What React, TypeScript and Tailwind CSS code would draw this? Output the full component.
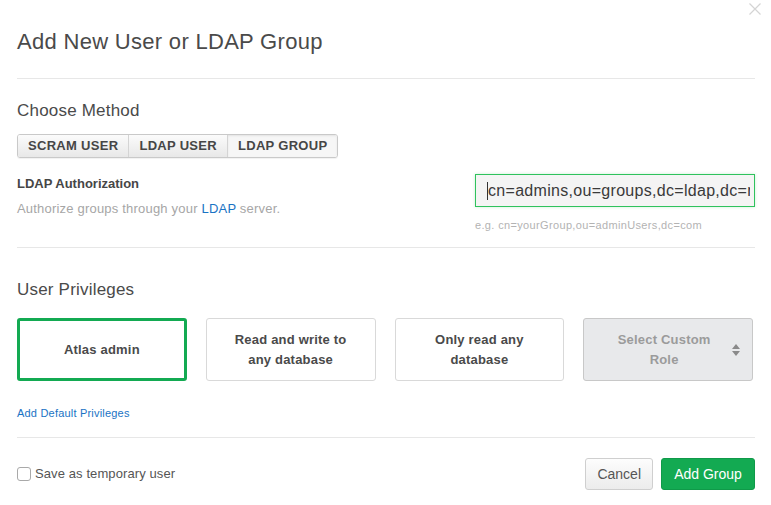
import { useState } from 'react';

const METHODS = ['SCRAM USER', 'LDAP USER', 'LDAP GROUP'];

const ROLES = [
  { id: 'atlas', label: 'Atlas admin' },
  { id: 'rw', label: 'Read and write to any database' },
  { id: 'ro', label: 'Only read any database' },
];

export default function App() {
  const [method, setMethod] = useState('LDAP GROUP');
  const [role, setRole] = useState('atlas');
  const [temporary, setTemporary] = useState(false);
  const [dn, setDn] = useState('cn=admins,ou=groups,dc=ldap,dc=mongodb,dc=com');

  return (
    <main
      className="relative w-[771px] h-[505px] bg-white pl-[17px] pr-[16px] text-[#464646] overflow-hidden"
      style={{ fontFamily: '"Liberation Sans", Arial, sans-serif' }}
    >
      {/* Close */}
      <button className="absolute right-[10px] top-[3px] w-[12px] h-[12px]" aria-label="Close">
        <svg viewBox="0 0 12 12" className="w-[12px] h-[12px]">
          <path d="M0.5 0.5 L11.5 11.5 M11.5 0.5 L0.5 11.5" stroke="#d4d4d4" strokeWidth="1.2" />
        </svg>
      </button>

      {/* Header */}
      <div className="pt-[29px] pb-[23px] border-b border-[#e7e7e7]">
        <h1 className="text-[22px] leading-[26px] tracking-[0.3px] text-[#4a4a4a]">Add New User or LDAP Group</h1>
      </div>

      {/* Method */}
      <section className="pt-[22px] pb-[15px] border-b border-[#e7e7e7]">
        <h2 className="text-[17px] leading-[20px] tracking-[0.2px] text-[#4a4a4a]">Choose Method</h2>
        <div className="mt-[13px] inline-flex h-[24px] rounded-[3px] border border-[#c9c9c9] overflow-hidden shadow-[0_1px_1px_rgba(0,0,0,0.06)]">
          {METHODS.map((m, i) => (
            <button
              key={m}
              onClick={() => setMethod(m)}
              className={`h-full px-[10px] text-[13px] font-bold tracking-[0.3px] text-[#464646] ${
                i > 0 ? 'border-l border-[#d4d4d4]' : ''
              } ${
                method === m
                  ? 'bg-[#f6f6f6] shadow-[inset_0_1px_2px_rgba(0,0,0,0.08)]'
                  : 'bg-gradient-to-b from-[#fbfbfb] to-[#e8e8e8]'
              }`}
            >
              {m}
            </button>
          ))}
        </div>

        <div className="mt-[16px] flex justify-between">
          <div className="pt-[2px]">
            <p className="text-[13px] leading-[16px] font-bold text-[#464646]">LDAP Authorization</p>
            <p className="mt-[9px] text-[13px] leading-[16px] tracking-[0.2px] text-[#a6a6a6]">
              Authorize groups through your <span className="text-[#1a73c4]">LDAP</span> server.
            </p>
          </div>
          <div className="w-[280px]">
            <div className="relative">
              <input
                value={dn}
                onChange={(e) => setDn(e.target.value)}
                className="block w-full h-[33px] border border-[#2fc25d] bg-[#f4f4f4] pl-[12px] pr-[4px] text-[16px] text-[#3a3a3a] tracking-[0.3px] outline-none shadow-[0_0_3px_rgba(47,194,93,0.25)]"
                style={{ fontFamily: '"Liberation Sans", Arial, sans-serif' }}
              />
              {/* text caret */}
              <span className="absolute left-[12px] top-[8px] w-px h-[18px] bg-[#333]" />
            </div>
            <p className="mt-[11px] text-[11px] leading-[14px] tracking-[0.35px] text-[#b3b3b3]">e.g. cn=yourGroup,ou=adminUsers,dc=com</p>
          </div>
        </div>
      </section>

      {/* Privileges */}
      <section className="pt-[32px] pb-[17px] border-b border-[#e7e7e7]">
        <h2 className="text-[17px] leading-[20px] tracking-[0.2px] text-[#4a4a4a]">User Privileges</h2>
        <div className="mt-[18px] w-[736px] grid grid-cols-4 gap-[19px]">
          {ROLES.map((r) => (
            <button
              key={r.id}
              onClick={() => setRole(r.id)}
              className={`h-[63px] rounded-[3px] bg-white flex items-center justify-center px-[22px] text-[13px] leading-[20px] font-bold tracking-[0.2px] text-[#4a4a4a] text-center ${
                role === r.id ? 'border-[3px] border-[#13aa52]' : 'border border-[#d9d9d9]'
              }`}
            >
              {r.label}
            </button>
          ))}
          <button className="h-[63px] rounded-[3px] bg-[#e8e9eb] border border-[#c8c8c8] flex items-center pl-[22px] pr-[12px] text-[13px] leading-[20px] font-bold tracking-[0.2px] text-[#9b9b9b]">
            <span className="flex-1 text-center">Select Custom Role</span>
            <svg viewBox="0 0 8 12" className="w-[8px] h-[12px] ml-[10px]">
              <path d="M4 0 L8 5 L0 5 Z M0 7 L8 7 L4 12 Z" fill="#8a8a8a" />
            </svg>
          </button>
        </div>
        <a href="#" className="block mt-[25px] text-[11px] leading-[14px] tracking-[0.2px] text-[#1a73c4]">
          Add Default Privileges
        </a>
      </section>

      {/* Footer */}
      <div className="pt-[20px] flex items-center justify-between">
        <label className="flex items-center gap-[4px] text-[13px] tracking-[0.1px] text-[#555] cursor-pointer">
          <span
            onClick={() => setTemporary(!temporary)}
            className={`w-[14px] h-[14px] rounded-[3px] border ${temporary ? 'bg-[#13aa52] border-[#13aa52]' : 'border-[#a9a9a9] bg-white'}`}
          />
          Save as temporary user
        </label>
        <div className="flex gap-[8px]">
          <button className="h-[32px] px-[11px] rounded-[3px] border border-[#cfcfcf] bg-gradient-to-b from-[#fdfdfd] to-[#ececec] text-[14px] text-[#555]">
            Cancel
          </button>
          <button className="h-[32px] w-[94px] rounded-[3px] border border-[#0f9a49] bg-[#13aa52] text-[14px] text-white">
            Add Group
          </button>
        </div>
      </div>
    </main>
  );
}
